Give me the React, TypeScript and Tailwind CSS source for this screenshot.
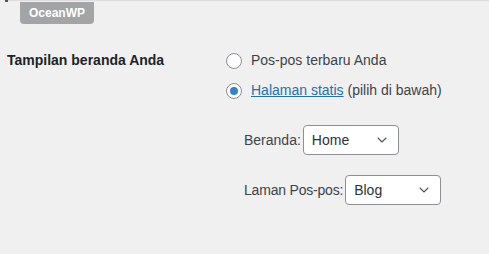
import { ChevronDown } from 'lucide-react'

function Radio({ checked }: { checked?: boolean }) {
  return (
    <span className="flex h-4 w-4 shrink-0 items-center justify-center rounded-full border border-[#8c8f94] bg-white">
      {checked && <span className="h-2 w-2 rounded-full bg-[#3582c4]" />}
    </span>
  )
}

function Select({ value }: { value: string }) {
  return (
    <div className="flex h-[30px] w-[96px] items-center justify-between rounded border border-[#8c8f94] bg-white pl-2 pr-2 text-[14px] text-[#2c3338]">
      <span>{value}</span>
      <ChevronDown size={16} strokeWidth={1.6} className="text-[#50575e]" />
    </div>
  )
}

export default function App() {
  return (
    <div className="h-[254px] w-[489px] overflow-hidden bg-[#f0f0f1] text-[14px] text-[#3c434a]" style={{ fontFamily: '"Segoe UI", "Liberation Sans", sans-serif' }}>
      <div className="relative h-[2px] border-t border-[#dcdcde] ml-[5px]">
        <span className="absolute -top-px left-0 h-[2px] w-[3px] bg-[#50575e]" />
      </div>
      <div className="ml-[20px] -mt-[2px] inline-flex h-[22px] items-center rounded-b bg-[#a2a4a6] px-[9px] text-[12px] font-bold text-white">
        OceanWP
      </div>
      <div className="mt-[26px] flex">
        <div className="w-[220px] shrink-0 pl-[7px] font-bold text-[#1d2327]">Tampilan beranda Anda</div>
        <div className="flex flex-col">
          <label className="flex items-center gap-[9px] pl-[6px]">
            <Radio />
            <span>Pos-pos terbaru Anda</span>
          </label>
          <label className="mt-[9px] flex items-center gap-[9px] pl-[6px]">
            <Radio checked />
            <span>
              <a className="text-[#2271b1] underline">Halaman statis</a> (pilih di bawah)
            </span>
          </label>
          <div className="mt-[24px] flex items-center gap-[2px] pl-[24px]">
            <span>Beranda:</span>
            <Select value="Home" />
          </div>
          <div className="mt-[20px] flex items-center gap-[2px] pl-[24px]">
            <span className="tracking-[-0.2px]">Laman Pos-pos:</span>
            <Select value="Blog" />
          </div>
        </div>
      </div>
    </div>
  )
}
